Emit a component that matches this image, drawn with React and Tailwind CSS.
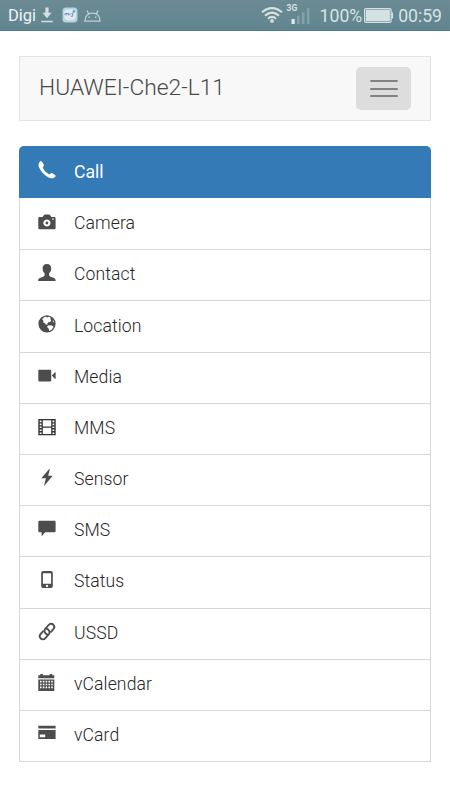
import React from 'react';
import { useState } from 'react';

const PhoneIcon = () => (
    <path d="M2.1 0.4C2.8-.1 3.5.1 4 .8L5.6 3.3C6.2 4.3 5.9 4.9 5.3 5.5 4.7 6.1 4.6 6.5 5 7.3 6.3 9.8 8.2 11.7 10.6 13 11.4 13.4 11.8 13.3 12.4 12.7 13.1 12 13.8 11.9 14.6 12.4L17 14C17.8 14.6 17.8 15.2 17.2 15.8 15.4 17.7 12.7 17.8 10 16.2 6.2 13.9 3.2 10.8 1.3 7 0 4.3.3 1.8 2.1.4Z" />
);

const CameraIcon = () => (
    <path
        fillRule="evenodd"
        d="M.3 5.2Q.3 4 1.5 4H4.5L6 1.9Q6.3 1.5 6.9 1.5H11.1Q11.6 1.5 12 1.9L13.4 4H16.2Q17.6 4 17.6 5.4V15Q17.6 16.2 16.4 16.2H1.5Q.3 16.2.3 15ZM8.9 6.4a3.6 3.6 0 1 0 .01 0ZM14.2 5.4V6.7H15.7V5.4ZM8.9 8.6a1.4 1.4 0 1 1-.01 0Z"
    />
);

const UserIcon = () => (
    <path d="M8.9 0C11.8 0 13.2 1.7 13.2 4.3 13.2 6.7 12.4 8.2 11.2 9.2V10.8C11.2 11.8 11.6 12.2 12.6 12.7L16 14.1C17.2 14.7 17.6 15.5 17.6 17H.2C.2 15.5.6 14.7 1.8 14.1L5.2 12.7C6.2 12.2 6.6 11.8 6.6 10.8V9.2C5.4 8.2 4.6 6.7 4.6 4.3 4.6 1.7 6 0 8.9 0Z" />
);

const GlobeIcon = () => (
    <>
        <circle cx="9" cy="8.8" r="8.6" />
        <path fill="#fff" d="M5.6 2.4 7.7 1.6 9 2.4 11 1.7 13 2.8 12.2 3.8 13.3 5.4 12.2 7 10.4 7.2 9.3 8.6 9.6 9.8 7.9 9.5 6.8 8.2 5.4 7.5 5.2 5.3 4.2 4.4ZM9.2 11.2 11 10.2 13.8 10.5 15.6 11.8 13.9 14.5 11.2 16 10.8 13.8 9.4 12.6ZM15 5 15.9 6.4 15.9 7.6 14.8 6.8Z" />
    </>
);

const VideoIcon = () => (
    <path d="M1.1 2.7H12.4Q13.2 2.7 13.2 3.5V13.6Q13.2 14.4 12.4 14.4H1.1Q.3 14.4.3 13.6V3.5Q.3 2.7 1.1 2.7ZM13.8 8.5 17 5.2H17.6V12H17Z" />
);

const FilmIcon = () => (
    <path
        fillRule="evenodd"
        fill="#333"
        d="M.3 1H17.7V17.2H.3ZM4.8 2.3V8.4H13.2V2.3ZM4.8 9.7V15.9H13.2V9.7ZM1.7 2.5V4.2H3.5V2.5ZM1.7 5.6V7.2H3.5V5.6ZM1.7 8.5V10.1H3.5V8.5ZM1.7 11.4V13H3.5V11.4ZM1.7 14.4V15.9H3.5V14.4ZM14.5 2.5V4.2H16.3V2.5ZM14.5 5.6V7.2H16.3V5.6ZM14.5 8.5V10.1H16.3V8.5ZM14.5 11.4V13H16.3V11.4ZM14.5 14.4V15.9H16.3V14.4Z"
    />
);

const FlashIcon = () => (
    <path d="M11.2 0 3.3 9.3H7.9L5.9 17.2 14.7 6.8H10.2L11.8.2Z" />
);

const CommentIcon = () => (
    <path d="M1.5.8H16.4Q17.6.8 17.6 2V11Q17.6 12.2 16.4 12.2H7.2L3.6 16.2V12.2H1.5Q.3 12.2.3 11V2Q.3.8 1.5.8Z" />
);

const MobileIcon = () => (
    <path
        fillRule="evenodd"
        d="M5 0H13Q14.8 0 14.8 1.8V15.2Q14.8 17 13 17H5Q3.2 17 3.2 15.2V1.8Q3.2 0 5 0ZM4.9 2.3V12.8H13.1V2.3ZM9 13.8a1.2 1.2 0 1 0 .01 0Z"
    />
);

const LinkIcon = () => (
    <g fill="none" stroke="currentColor" strokeWidth="1.9" strokeLinecap="round" strokeLinejoin="round">
        <path d="M9.6 11.6C7 10.8 5.6 8.3 7 6.2L10.6 2C12 .4 14.3.5 15.4 1.8 16.6 3.1 16.5 4.8 15.5 6L13 8.9" />
        <path d="M8.4 5.6C11 6.4 12.4 8.9 11 11L7.4 15.2C6 16.8 3.7 16.7 2.6 15.4 1.4 14.1 1.5 12.4 2.5 11.2L5 8.3" />
    </g>
);

const CalendarIcon = () => (
    <path
        fillRule="evenodd"
        d="M.3 1.3H2.3V0H5V1.3H11.6V0H14.3V1.3H16.3V4.2H.3ZM.3 5.4H16.3V16.9H.3ZM2 6.8V8.4H3.6V6.8ZM4.8 6.8V8.4H6.4V6.8ZM7.6 6.8V8.4H9.2V6.8ZM10.4 6.8V8.4H12V6.8ZM13.2 6.8V8.4H14.8V6.8ZM2 9.7V11.3H3.6V9.7ZM4.8 9.7V11.3H6.4V9.7ZM7.6 9.7V11.3H9.2V9.7ZM10.4 9.7V11.3H12V9.7ZM13.2 9.7V11.3H14.8V9.7ZM2 12.6V14.2H3.6V12.6ZM4.8 12.6V14.2H6.4V12.6ZM7.6 12.6V14.2H9.2V12.6ZM10.4 12.6V14.2H12V12.6ZM13.2 12.6V14.2H14.8V12.6Z"
    />
);

const CardIcon = () => (
    <path fillRule="evenodd" d="M.3.8H17.6V3.4H.3ZM.3 5H17.6V14H.3ZM1.8 9.6V12.2H7.2V9.6Z" />
);

const MENU_ITEMS = [
    { label: 'Call', Icon: PhoneIcon },
    { label: 'Camera', Icon: CameraIcon },
    { label: 'Contact', Icon: UserIcon },
    { label: 'Location', Icon: GlobeIcon },
    { label: 'Media', Icon: VideoIcon },
    { label: 'MMS', Icon: FilmIcon },
    { label: 'Sensor', Icon: FlashIcon },
    { label: 'SMS', Icon: CommentIcon },
    { label: 'Status', Icon: MobileIcon },
    { label: 'USSD', Icon: LinkIcon },
    { label: 'vCalendar', Icon: CalendarIcon },
    { label: 'vCard', Icon: CardIcon },
];

const StatusBar = () => (
    <div className="h-[31px] shrink-0 flex items-center pl-2 pr-2 bg-linear-to-b from-[#6c8a93] to-[#618690] border-b border-[#4d7c88] text-[#d8e3e6] text-[17.6px]">
        <span className="text-[16.5px] text-[#eff5f6] pt-[3px] w-[27.5px]">Digi</span>

        <svg className="ml-[5px] w-3 h-4" viewBox="0 0 12 16" fill="#d5e0e2">
            <path d="M4.4.5H7.6V5.8H10.6L6 11.2 1.4 5.8H4.4ZM.3 13.8H11.8V15.3H.3Z" />
        </svg>

        <svg className="ml-[9px] w-4 h-4" viewBox="0 0 16 16">
            <rect x=".5" y=".5" width="15" height="15" rx="3.5" fill="#b4d3de" />
            <path fill="#dfe9ee" d="M2 5Q3 1.5 7 2.5 12 1 14 5V10Q13 14 8 13.5 3 14 2 10Z" />
            <path d="M3 8.3V6.5H4.8V8.3M4.8 6.5H6.6V8.3M8 6.5V8.3M9.5 6.5H11L10.5 9.3H9" fill="none" stroke="#6a86c2" strokeWidth=".9" />
            <circle cx="11.8" cy="4.5" r="1.3" fill="#26b9e8" />
        </svg>

        <svg className="ml-[6px] mt-px w-[17px] h-3" viewBox="0 0 17 12" fill="none" stroke="#c1d0d4" strokeWidth="1.3">
            <path d="M.9 11.2C1.1 6 4.2 3.1 8.5 3.1S15.9 6 16.1 11.2ZM4.7 3.9 3 .6M12.3 3.9 14 .6" />
            <path d="M5.3 6.5V8M11.7 6.5V8" strokeWidth="1.5" />
        </svg>

        <div className="ml-auto flex items-center">
            <svg className="w-[22px] h-4 mt-px" viewBox="0 0 22 16" fill="none" stroke="#d6e1e4" strokeWidth="2.1">
                <path d="M1 5.2Q11-3 21 5.2M4 8.6Q11 2.8 18 8.6M7 11.7Q11 8.2 15 11.7" />
                <circle cx="11" cy="13.9" r="1.9" fill="#d6e1e4" stroke="none" />
            </svg>

            <div className="relative ml-[7px] w-[20px] h-5">
                <span className="absolute -left-[3px] -top-px text-[8.5px] leading-none font-bold">3G</span>
                <svg className="w-[20px] h-5" viewBox="0 0 20 20">
                    <rect x="1.5" y="14" width="3.2" height="5" fill="#e0e8ea" />
                    <path d="M7 10.8H9.5V19H7ZM12 7.3H14.5V19H12ZM17 3H19.5V19H17Z" fill="#84a0a9" />
                </svg>
            </div>

            <span className="ml-[10px] pt-[2px]">100%</span>

            <svg className="ml-[2px] w-[29px] h-[15px] mt-px" viewBox="0 0 29 15">
                <rect x=".6" y=".6" width="26.5" height="13.8" rx="1.5" fill="none" stroke="#d6e1e4" strokeWidth="1.2" />
                <rect x="1.8" y="1.8" width="24.1" height="11.4" fill="#d6e1e4" />
                <path d="M27.5 4.5H29V10.5H27.5Z" fill="#d6e1e4" />
            </svg>

            <span className="ml-[5px] pt-[2px]">00:59</span>
        </div>
    </div>
);

const App = () => {

    const [selected, setSelected] = useState('Call');

    return (
        <div className="w-full h-screen flex flex-col bg-white font-['Roboto',sans-serif] overflow-hidden">
            <StatusBar />

            <main className="px-[19px] pt-[25px]">
                <nav className="h-[65px] flex items-center justify-between pl-[19px] pr-[19px] bg-[#f8f8f8] border border-[#e3e3e3]">
                    <span className="text-[22.8px] font-light text-[#484848] -mt-px">HUAWEI-Che2-L11</span>
                    <button
                        aria-label="Toggle navigation"
                        className="w-[55px] h-[43px] rounded-[5px] bg-[#ddd] flex flex-col items-center justify-center gap-[5.5px]"
                    >
                        <span className="w-7 h-[2px] rounded-full bg-[#828282]" />
                        <span className="w-7 h-[2px] rounded-full bg-[#828282]" />
                        <span className="w-7 h-[2px] rounded-full bg-[#828282]" />
                    </button>
                </nav>

                <ul className="mt-[25px] rounded-t-[5px] border border-t-0 border-[#d8d8d8]">
                    {MENU_ITEMS.map(({ label, Icon }) => (
                        <li
                            key={label}
                            onClick={() => setSelected(label)}
                            className={`flex items-center cursor-pointer ${selected === label
                                ? 'h-[52px] bg-[#337ab7] text-white -mx-px pl-[19.4px] rounded-t-[5px]'
                                : 'h-[51.2px] text-[#4d4d4d] pl-[18.4px] border-t border-[#d8d8d8] nth-2:border-t-0'}`}
                        >
                            <svg className="w-[18px] h-[18px] -mt-[4px] overflow-visible" viewBox="0 0 18 18" fill="currentColor">
                                <Icon />
                            </svg>
                            <span className={`ml-[17.6px] text-[17.6px] ${selected === label ? 'mt-0' : '-mt-[1.5px] font-light tracking-[0.1px] text-[#262626]'}`}>
                                {label}
                            </span>
                        </li>
                    ))}
                </ul>
            </main>
        </div>
    );
}

export default App;
